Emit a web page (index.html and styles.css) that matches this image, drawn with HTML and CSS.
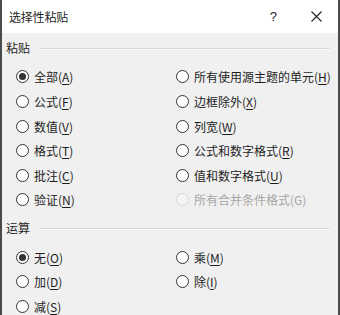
FILE: index.html
```html
<!DOCTYPE html>
<html lang="zh">
<head>
<meta charset="utf-8">
<link rel="stylesheet" href="styles.css">
</head>
<body>
<div class="dialog">
  <div class="titlebar">
    <span class="title">选择性粘贴</span>
    <span class="help">?</span>
    <span class="close"><svg width="11" height="11" viewBox="0 0 11 11"><path d="M0.5 0.5 L10.5 10.5 M10.5 0.5 L0.5 10.5" stroke="#222" stroke-width="1.1" fill="none"/></svg></span>
  </div>
  <div class="content">
    <div class="group-label"><span>粘贴</span><i class="rule"></i></div>
    <div class="grid">
      <label class="opt"><span class="radio on"></span>全部(<u>A</u>)</label>
      <label class="opt"><span class="radio"></span>所有使用源主题的单元(<u>H</u>)</label>
      <label class="opt"><span class="radio"></span>公式(<u>F</u>)</label>
      <label class="opt"><span class="radio"></span>边框除外(<u>X</u>)</label>
      <label class="opt"><span class="radio"></span>数值(<u>V</u>)</label>
      <label class="opt"><span class="radio"></span>列宽(<u>W</u>)</label>
      <label class="opt"><span class="radio"></span>格式(<u>T</u>)</label>
      <label class="opt"><span class="radio"></span>公式和数字格式(<u>R</u>)</label>
      <label class="opt"><span class="radio"></span>批注(<u>C</u>)</label>
      <label class="opt"><span class="radio"></span>值和数字格式(<u>U</u>)</label>
      <label class="opt"><span class="radio"></span>验证(<u>N</u>)</label>
      <label class="opt disabled"><span class="radio"></span>所有合并条件格式(G)</label>
    </div>
    <div class="group-label second"><span>运算</span><i class="rule"></i></div>
    <div class="grid">
      <label class="opt"><span class="radio on"></span>无(<u>O</u>)</label>
      <label class="opt"><span class="radio"></span>乘(<u>M</u>)</label>
      <label class="opt"><span class="radio"></span>加(<u>D</u>)</label>
      <label class="opt"><span class="radio"></span>除(<u>I</u>)</label>
      <label class="opt"><span class="radio"></span>减(<u>S</u>)</label>
    </div>
  </div>
</div>
</body>
</html>
```
FILE: styles.css
```css
html, body {
  margin: 0;
  padding: 0;
  background: #f0f0f0;
}
body {
  font-family: "Noto Sans CJK SC", "Noto Sans", sans-serif;
  font-size: 12px;
  color: #1e1e1e;
}
.dialog {
  width: 340px;
  height: 315px;
  box-sizing: border-box;
  border-left: 2px solid #4a4a4a;
  border-right: 2px solid #4a4a4a;
  background: #f0f0f0;
  overflow: hidden;
}
.titlebar {
  height: 33px;
  background: #fff;
  display: flex;
  align-items: center;
  padding-left: 7px;
  padding-right: 16px;
}
.title {
  flex: 1;
  font-size: 12px;
  letter-spacing: -0.2px;
}
.help {
  font-family: "Liberation Sans", sans-serif;
  font-size: 13px;
  margin-right: 34px;
}
.close {
  display: flex;
  align-items: center;
}
.content {
  padding: 7px 8px 0 4px;
}
.group-label {
  display: flex;
  align-items: center;
  height: 16px;
  line-height: 16px;
}
.group-label .rule {
  flex: 1;
  height: 1px;
  background: #d9d9d9;
  border-bottom: 1px solid #fbfbfb;
  margin-left: 9px;
  margin-top: 2px;
}
.group-label.second {
  margin-top: 8px;
}
.grid {
  display: grid;
  grid-template-columns: 160px 1fr;
  grid-auto-rows: 24.6px;
  padding-left: 10px;
  margin-top: 8.7px;
}
.opt {
  display: flex;
  align-items: center;
  white-space: nowrap;
}
.opt u {
  text-decoration-thickness: 1px;
  text-underline-offset: 2px;
}
.radio {
  width: 13px;
  height: 13px;
  box-sizing: border-box;
  border: 1px solid #333;
  border-radius: 50%;
  background: #fff;
  margin-right: 5px;
  display: flex;
  align-items: center;
  justify-content: center;
  flex: none;
}
.radio.on::after {
  content: "";
  width: 7px;
  height: 7px;
  border-radius: 50%;
  background: #333;
}
.disabled {
  color: #a6a6a6;
}
.disabled .radio {
  border-color: #d4d4d4;
  background: #f4f4f4;
}
```
